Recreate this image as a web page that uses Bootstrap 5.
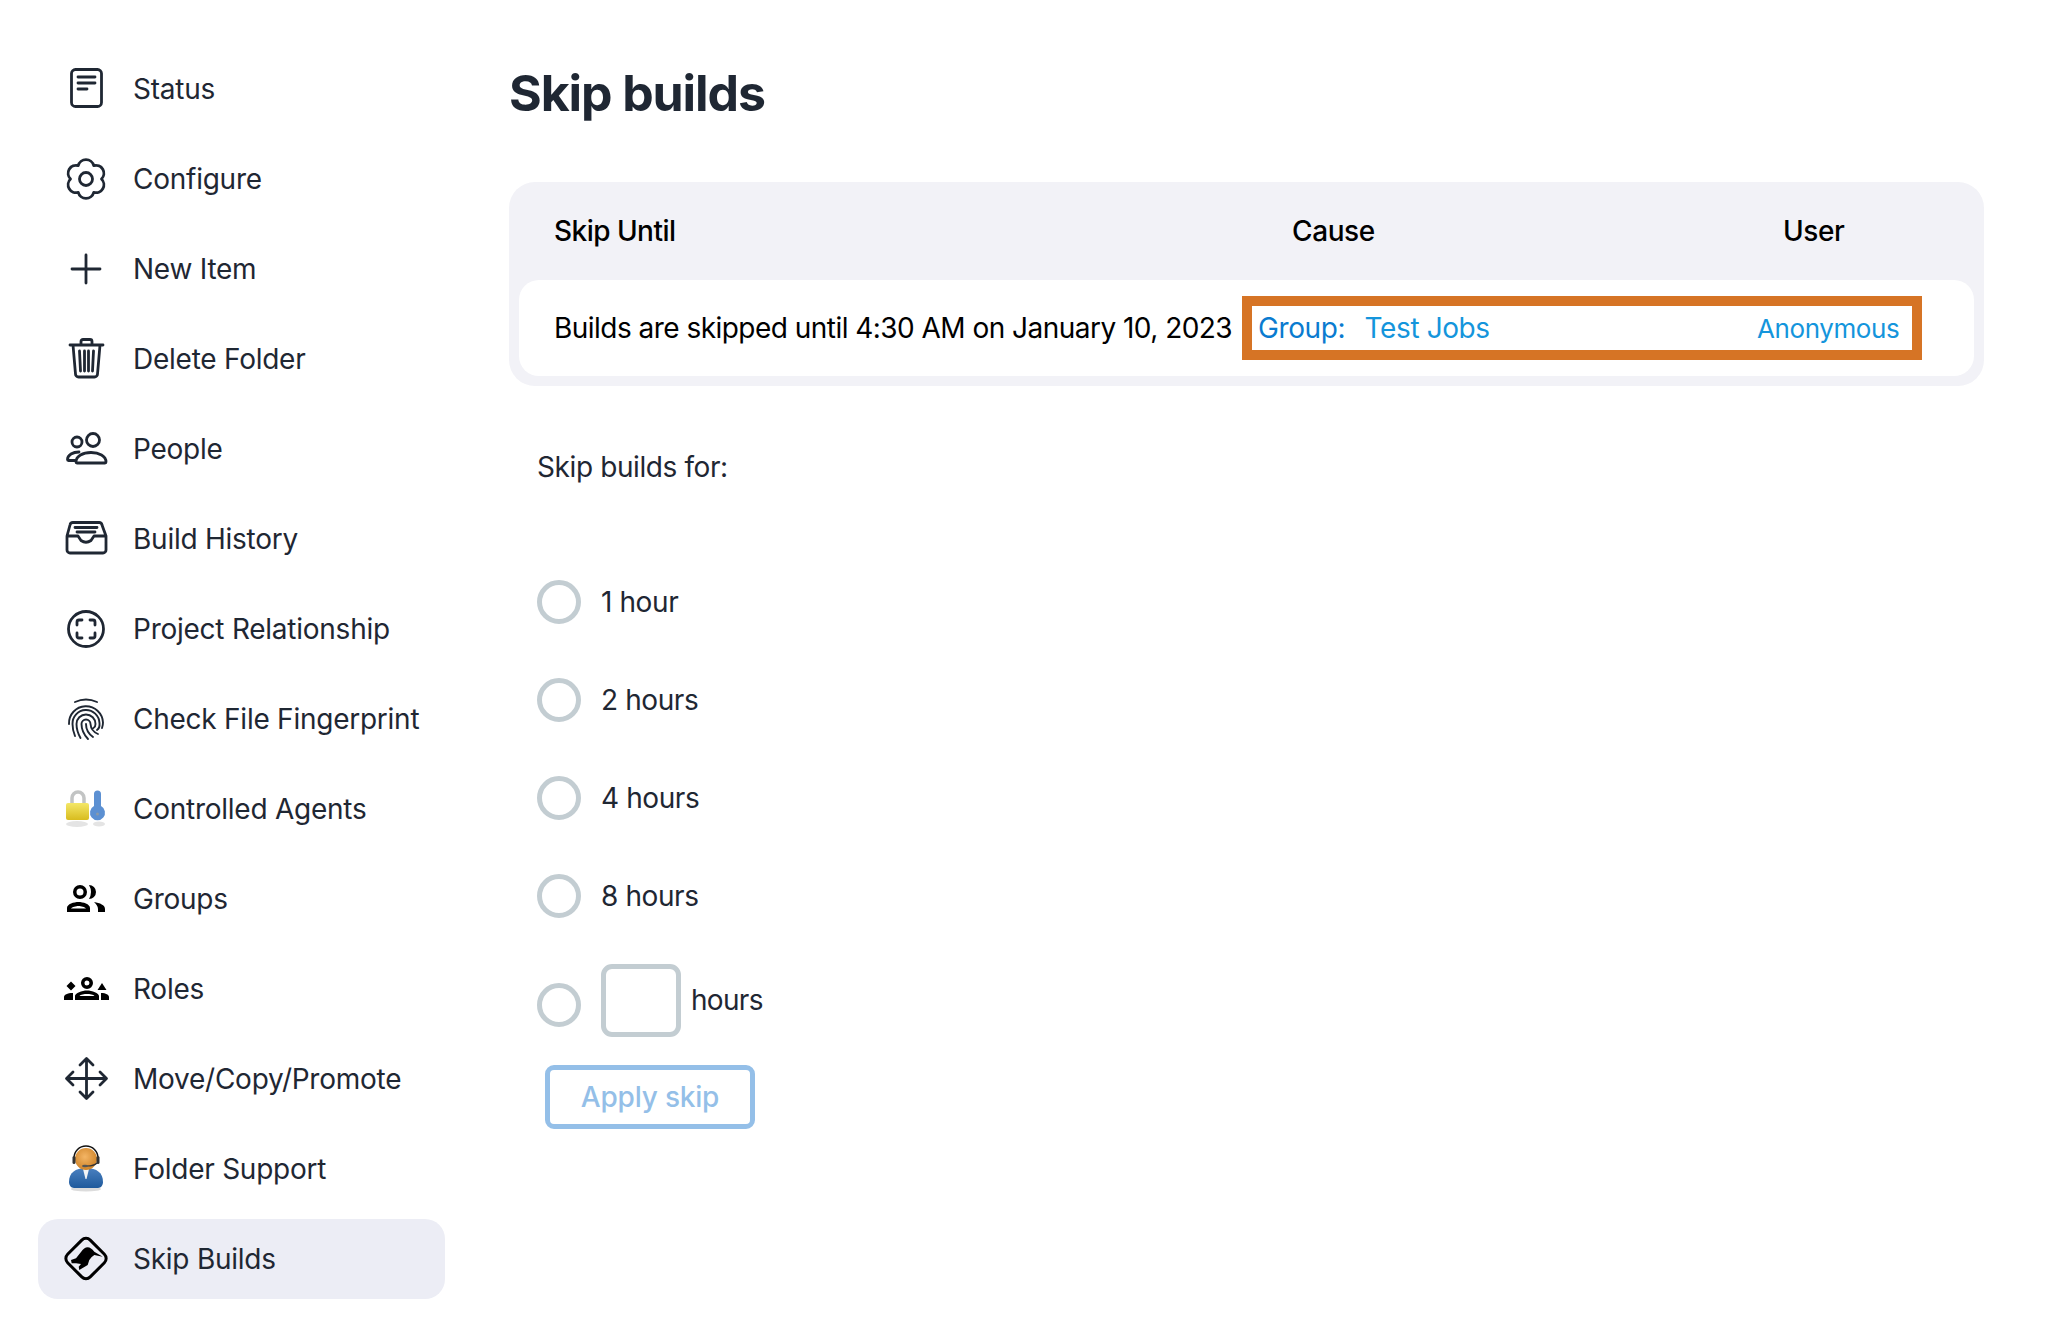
<!DOCTYPE html>
<html lang="en">
<head>
    <meta charset="UTF-8">
    <meta name="viewport" content="width=device-width, initial-scale=1.0">
    <title>Skip builds</title>
    <link rel="stylesheet" href="https://cdn.jsdelivr.net/npm/bootstrap@5.3.0/dist/css/bootstrap.min.css">
    <style>
        body {
            background: #fff;
            color: #1f2733;
            font-family: Inter, "Liberation Sans", sans-serif;
            font-size: 28px;
            letter-spacing: -0.4px;
        }
        .side-wrap {
            width: 509px;
            padding: 49px 0 0 38px;
            flex-shrink: 0;
        }
        .side-nav {
            width: 407px;
            gap: 10px;
        }
        .side-nav .nav-link {
            height: 80px;
            padding: 0 0 0 24px;
            gap: 23px;
            color: #1f2733;
            border-radius: 20px;
            letter-spacing: -0.25px;
        }
        .side-nav .nav-link.active {
            background: #ecedf5;
        }
        .side-icon {
            width: 48px;
            height: 48px;
            flex-shrink: 0;
        }
        .ico-line {
            fill: none;
            stroke: #1f2733;
            stroke-width: 2.8;
            stroke-linecap: round;
            stroke-linejoin: round;
        }
        .ico-thin {
            stroke-width: 1.9;
        }
        .main-wrap {
            width: 1475px;
        }
        .page-title {
            font-size: 50px;
            font-weight: 700;
            line-height: 60px;
            letter-spacing: -1.1px;
            margin: 63px 0 59px;
            color: #1f2733;
        }
        .skip-box {
            background: #f2f2f7;
            border-radius: 26px;
            padding: 0 10px 10px;
        }
        .skip-table {
            --bs-table-bg: transparent;
            table-layout: fixed;
            color: #000;
        }
        .skip-table th {
            height: 98px;
            vertical-align: middle;
            font-weight: 500;
            letter-spacing: -0.4px;
            padding: 0;
        }
        .skip-table td {
            height: 96px;
            background: #fff;
            vertical-align: middle;
            padding: 0;
        }
        .skip-table td:first-child {
            border-radius: 20px 0 0 20px;
        }
        .skip-table td:last-child {
            border-radius: 0 20px 20px 0;
        }
        .skip-table .cell-one {
            width: 731px;
            padding-left: 35px;
            letter-spacing: -0.53px;
        }
        .skip-table .cell-two {
            width: 495px;
        }
        .skip-table th.cell-two {
            padding-left: 42px;
        }
        .skip-table th.cell-three {
            padding-left: 38px;
        }
        .skip-table td.cell-two {
            padding-left: 8px;
        }
        .skip-table td.cell-three {
            padding-left: 12px;
        }
        .group-link {
            color: #0a7bd0;
            text-decoration: none;
            margin-right: 12px;
        }
        .job-link {
            color: #1495dc;
            text-decoration: none;
        }
        .user-link {
            color: #1495dc;
            text-decoration: none;
            font-size: 26px;
        }
        .mark-box {
            position: absolute;
            left: 733px;
            top: 114px;
            width: 680px;
            height: 64px;
            border: 10px solid #d67425;
            pointer-events: none;
        }
        .skip-form {
            padding-left: 28px;
        }
        .for-label {
            line-height: 40px;
            margin: 61px 0 93px;
        }
        .radio-row {
            height: 44px;
            margin-bottom: 54px;
            gap: 20px;
        }
        .radio-row .form-check-input,
        .custom-row .form-check-input {
            width: 44px;
            height: 44px;
            margin: 0;
            border: 5px solid #c3cdd2;
            flex-shrink: 0;
        }
        .custom-row {
            margin-top: -8px;
            gap: 20px;
        }
        .custom-row .form-check-input {
            margin-top: 19px;
        }
        .hours-box {
            width: 80px;
            height: 73px;
            border: 5px solid #c3cdd2;
            border-radius: 11px;
            margin-right: -10px;
        }
        .hours-text {
            line-height: 73px;
            letter-spacing: -0.7px;
        }
        .apply-btn {
            display: block;
            width: 210px;
            height: 64px;
            margin: 28px 0 0 8px;
            padding: 0;
            border: 5px solid #94bfe8;
            border-radius: 9px;
            background: #fff;
            color: #94bfe8;
            font-size: 28px;
            letter-spacing: -0.2px;
            font-weight: 500;
        }
    </style>
</head>
<body>
    <div class="d-flex">
        <div class="side-wrap">
            <nav class="nav flex-column side-nav">
                <a class="nav-link d-flex align-items-center" href="#">
                    <svg class="side-icon" viewBox="0 0 48 48"><rect class="ico-line" x="9.5" y="4.5" width="30" height="37" rx="4"/><path class="ico-line" d="M16 12h17M16 18h17M16 24h9"/></svg>
                    Status
                </a>
                <a class="nav-link d-flex align-items-center" href="#">
                    <svg class="side-icon" viewBox="0 0 48 48"><path class="ico-line" d="M31.75 10.6A8 8 0 0 1 39.5 24A8 8 0 0 1 31.75 37.4A8 8 0 0 1 16.25 37.4A8 8 0 0 1 8.5 24A8 8 0 0 1 16.25 10.6A8 8 0 0 1 31.75 10.6Z"/><circle class="ico-line" cx="24" cy="24" r="6.5"/></svg>
                    Configure
                </a>
                <a class="nav-link d-flex align-items-center" href="#">
                    <svg class="side-icon" viewBox="0 0 48 48"><path class="ico-line" d="M24 10v28M10 24h28"/></svg>
                    New Item
                </a>
                <a class="nav-link d-flex align-items-center" href="#">
                    <svg class="side-icon" viewBox="0 0 48 48"><path class="ico-line" d="M8 10h33M11 10l2.500 29a3 3 0 0 0 3 3h16a3 3 0 0 0 3-3L38 10M19 10V6.500a2 2 0 0 1 2-2h7a2 2 0 0 1 2 2V10M17.500 16l1 20M22.500 16v20M26.500 16v20M31.500 16l-1 20"/></svg>
                    Delete Folder
                </a>
                <a class="nav-link d-flex align-items-center" href="#">
                    <svg class="side-icon" viewBox="0 0 48 48"><circle class="ico-line" cx="15" cy="17" r="5"/><circle class="ico-line" cx="31" cy="15" r="6.500"/><path class="ico-line" d="M14 37c0-6 7-9.500 15-9.500s15 3.500 15 9.500a1 1 0 0 1-1 1H15a1 1 0 0 1-1-1ZM17 27c-6 0-11.500 3-11.500 7.500a1 1 0 0 0 1 1H13"/></svg>
                    People
                </a>
                <a class="nav-link d-flex align-items-center" href="#">
                    <svg class="side-icon" viewBox="0 0 48 48"><path class="ico-line" d="M11 7.500h26a3 3 0 0 1 3 2.500l4 11v14a3 3 0 0 1-3 3H8a3 3 0 0 1-3-3V21l3-11a3 3 0 0 1 3-2.500ZM5 21h11l3 4.500q5 3.500 10 0l3-4.500h12M13 12.500h22M15 17h18"/></svg>
                    Build History
                </a>
                <a class="nav-link d-flex align-items-center" href="#">
                    <svg class="side-icon" viewBox="0 0 48 48"><circle class="ico-line" cx="24" cy="24" r="17.500"/><path class="ico-line" d="M15 20v-3a2 2 0 0 1 2-2h3M28 15h3a2 2 0 0 1 2 2v3M33 28v3a2 2 0 0 1-2 2h-3M20 33h-3a2 2 0 0 1-2-2v-3"/></svg>
                    Project Relationship
                </a>
                <a class="nav-link d-flex align-items-center" href="#">
                    <svg class="side-icon" viewBox="0 0 48 48"><path class="ico-line ico-thin" d="M13 7Q24 2 35 7M7 29A17 17 0 0 1 41 27.500Q41 30 40 33M13 41Q10.500 35 10.500 29A13.500 13.500 0 0 1 37.500 28Q38 33 35 35M18.500 43Q14.500 36 14.500 29A9.500 9.500 0 0 1 33.500 29Q33.500 32 31.500 33M26 44Q19.500 37 19.500 29A4.500 4.500 0 0 1 28.500 29Q29 36 36 39M24 29Q24 37 31 42"/></svg>
                    Check File Fingerprint
                </a>
                <a class="nav-link d-flex align-items-center" href="#">
                    <svg class="side-icon" viewBox="0 0 48 48">
                        <defs>
                            <linearGradient id="lockFill" x1="0" y1="0" x2="0" y2="1"><stop offset="0" stop-color="#f4e768"/><stop offset="1" stop-color="#d8bc1e"/></linearGradient>
                        </defs>
                        <ellipse cx="15" cy="39" rx="11" ry="3" fill="#e4e4e4"/>
                        <ellipse cx="37" cy="39" rx="6" ry="2.500" fill="#e4e4e4"/>
                        <path d="M10 19v-6a6 6 0 0 1 12 0v6" fill="none" stroke="#c2c4c4" stroke-width="3.500"/>
                        <rect x="4" y="18" width="23" height="17" rx="2" fill="url(#lockFill)"/>
                        <path d="M32 9a3.500 3.500 0 0 1 7 0v12a7.500 7.500 0 1 1-7 0Z" fill="#5c90d2"/>
                        <circle cx="35.500" cy="29" r="1.500" fill="#8a99a8"/>
                    </svg>
                    Controlled Agents
                </a>
                <a class="nav-link d-flex align-items-center" href="#">
                    <svg class="side-icon" viewBox="0 0 48 48">
                        <path fill="#000" fill-rule="evenodd" d="M18 10a7 7 0 1 1 0 14a7 7 0 0 1 0-14ZM18 13.500a3.500 3.500 0 1 0 0 7a3.500 3.500 0 0 0 0-7ZM5 37v-4c0-4 7-6 11.500-6s11.500 2 11.500 6v4ZM9 33.500h15c-1-1.500-5-2.500-7.500-2.500S10 32 9 33.500ZM27 10a7 7 0 0 1 0 14Q31 17 27 10ZM32 27c6 1 11 3 11 7v3h-7v-3c0-3-2-5-4-7Z"/>
                    </svg>
                    Groups
                </a>
                <a class="nav-link d-flex align-items-center" href="#">
                    <svg class="side-icon" viewBox="0 0 48 48">
                        <path fill="#000" fill-rule="evenodd" d="M25 12a6 6 0 1 1 0 12a6 6 0 0 1 0-12ZM25 15.500a2.500 2.500 0 1 0 0 5a2.500 2.500 0 0 0 0-5ZM13 35v-4c0-3 7-5.500 12-5.500s12 2.500 12 5.500v4ZM17.500 31h15c-1-1.500-5-2-7.500-2s-6.500.5-7.500 2ZM9 16.500l4.500 4.500L9 25.500 4.500 21ZM40 18l4.500 7h-9ZM2 35v-3c0-2 3-4 9-4v7ZM39 28c5 0 8 2 8 4v3h-8Z"/>
                    </svg>
                    Roles
                </a>
                <a class="nav-link d-flex align-items-center" href="#">
                    <svg class="side-icon" viewBox="0 0 48 48"><path class="ico-line" d="M24.500 4v39M5 23.500h39M18 10l6.500-6.500L31 10M18 37l6.500 6.500L31 37M11 17l-6.500 6.500L11 30M38 17l6.500 6.500L38 30"/></svg>
                    Move/Copy/Promote
                </a>
                <a class="nav-link d-flex align-items-center" href="#">
                    <svg class="side-icon" viewBox="0 0 48 48">
                        <defs>
                            <radialGradient id="headFill" cx="0.45" cy="0.4" r="0.65"><stop offset="0" stop-color="#f4b565"/><stop offset="1" stop-color="#cc8024"/></radialGradient>
                            <linearGradient id="bodyFill" x1="0" y1="0" x2="0" y2="1"><stop offset="0" stop-color="#4a80c0"/><stop offset="1" stop-color="#1f5a9c"/></linearGradient>
                        </defs>
                        <ellipse cx="24" cy="44" rx="15" ry="2.500" fill="#dcdcdc"/>
                        <path d="M7 37c0-9 6-14 17-14s17 5 17 14c0 3-2 6-5 6H12c-3 0-5-3-5-6Z" fill="url(#bodyFill)"/>
                        <path d="M21 24h6l-2.500 10h-1Z" fill="#f2f4f6"/>
                        <circle cx="24" cy="14" r="11" fill="url(#headFill)"/>
                        <path d="M12 13a12 12 0 0 1 24 0" fill="none" stroke="#111" stroke-width="1.500"/>
                        <rect x="10.500" y="11" width="3" height="8" rx="1.500" fill="#333"/>
                        <rect x="34.500" y="11" width="3" height="8" rx="1.500" fill="#333"/>
                        <path d="M35 18q-3 3-10 3" fill="none" stroke="#333" stroke-width="1.200"/>
                        <ellipse cx="23" cy="21" rx="3" ry="1.200" fill="#555"/>
                    </svg>
                    Folder Support
                </a>
                <a class="nav-link active d-flex align-items-center" href="#">
                    <svg class="side-icon" viewBox="0 0 48 48">
                        <rect x="8" y="7.500" width="32" height="32" rx="6" fill="none" stroke="#000" stroke-width="3" transform="rotate(45 24 23.500)"/>
                        <path fill="#000" d="M19 17Q22 12.300 25.700 12.300Q29 12.500 32.300 16.700L40.700 21.700L32.300 20Q29 22 27.300 25L25.700 30L17.300 35L16.700 31.700L19 29L14 28.300L9.700 28.300L9 25L14 23.300Z"/>
                    </svg>
                    Skip Builds
                </a>
            </nav>
        </div>
        <div class="main-wrap">
            <h1 class="page-title">Skip builds</h1>
            <div class="skip-box position-relative">
                <table class="table table-borderless skip-table mb-0">
                    <thead>
                        <tr>
                            <th class="cell-one">Skip Until</th>
                            <th class="cell-two">Cause</th>
                            <th class="cell-three">User</th>
                        </tr>
                    </thead>
                    <tbody>
                        <tr>
                            <td class="cell-one">Builds are skipped until 4:30 AM on January 10, 2023</td>
                            <td class="cell-two"><a class="group-link" href="#">Group:</a> <a class="job-link" href="#">Test Jobs</a></td>
                            <td class="cell-three"><a class="user-link" href="#">Anonymous</a></td>
                        </tr>
                    </tbody>
                </table>
                <div class="mark-box"></div>
            </div>
            <form class="skip-form">
                <div class="for-label">Skip builds for:</div>
                <div class="radio-row d-flex align-items-center">
                    <input class="form-check-input" type="radio" name="skip" id="skip1">
                    <label for="skip1">1 hour</label>
                </div>
                <div class="radio-row d-flex align-items-center">
                    <input class="form-check-input" type="radio" name="skip" id="skip2">
                    <label for="skip2">2 hours</label>
                </div>
                <div class="radio-row d-flex align-items-center">
                    <input class="form-check-input" type="radio" name="skip" id="skip4">
                    <label for="skip4">4 hours</label>
                </div>
                <div class="radio-row d-flex align-items-center">
                    <input class="form-check-input" type="radio" name="skip" id="skip8">
                    <label for="skip8">8 hours</label>
                </div>
                <div class="custom-row d-flex align-items-start">
                    <input class="form-check-input" type="radio" name="skip" id="skipn">
                    <input class="form-control hours-box" type="text">
                    <label class="hours-text" for="skipn">hours</label>
                </div>
                <button class="btn apply-btn" type="button">Apply skip</button>
            </form>
        </div>
    </div>
    <script src="https://cdn.jsdelivr.net/npm/bootstrap@5.3.0/dist/js/bootstrap.bundle.min.js"></script>
</body>
</html>
